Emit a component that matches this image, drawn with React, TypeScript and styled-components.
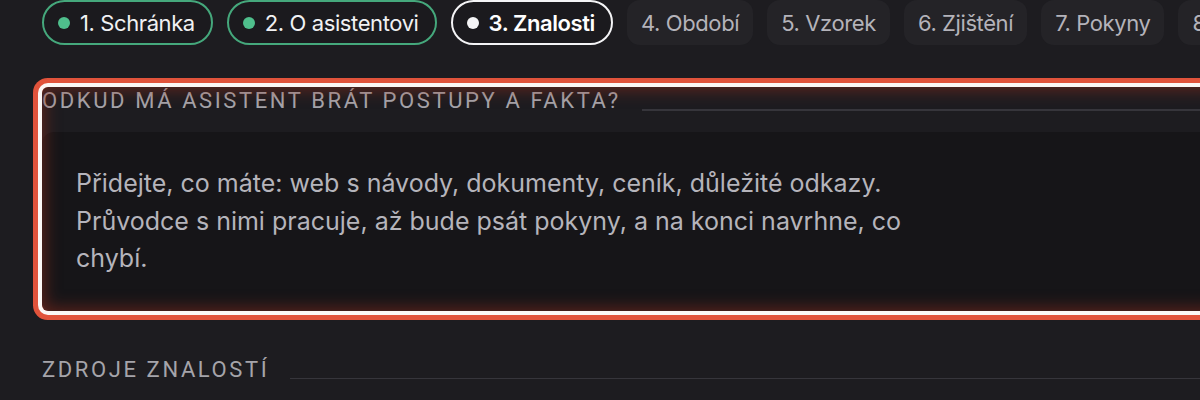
import React from "react";
import styled, { createGlobalStyle, css } from "styled-components";

const GlobalStyle = createGlobalStyle`
  html, body {
    margin: 0;
    padding: 0;
    background: #1d1c20;
    overflow: hidden;
  }
  body {
    font-family: Inter, "Noto Sans", sans-serif;
    -webkit-font-smoothing: antialiased;
  }
  * { box-sizing: border-box; }
`;

const Page = styled.div`
  width: 1320px;
  padding: 0 42px;
`;

const StepBar = styled.nav`
  display: flex;
  flex-wrap: nowrap;
  gap: 14px;
  height: 45px;
`;

type StepState = "done" | "active" | "todo";

const Step = styled.div<{ $state: StepState }>`
  display: flex;
  align-items: center;
  gap: 10px;
  flex: none;
  height: 45px;
  padding: 0 16px 0 14px;
  font-size: 22px;
  letter-spacing: -0.4px;
  white-space: nowrap;
  border: 2px solid transparent;
  ${({ $state }) =>
    $state === "done"
      ? css`
          border-color: #45a87c;
          border-radius: 999px;
          color: #f1f1f3;
          background: #1b1a1e;
        `
      : $state === "active"
      ? css`
          border-color: #f4f4f6;
          border-radius: 999px;
          color: #ffffff;
          font-weight: 600;
          background: #1b1a1e;
        `
      : css`
          border-radius: 13px;
          padding: 0 12px;
          color: #b4b3ba;
          background: #242327;
        `}
`;

const Dot = styled.span<{ $state: StepState }>`
  width: 12px;
  height: 12px;
  border-radius: 50%;
  flex: none;
  background: ${({ $state }) => ($state === "done" ? "#4fbf8c" : "#f4f4f6")};
`;

const Section = styled.section`
  position: relative;
  margin-top: 42px;
`;

const HighlightRing = styled.div`
  position: absolute;
  inset: 0;
  border-radius: 6px;
  pointer-events: none;
  box-shadow: 0 0 0 4px #fbf7f5, 0 0 0 9px #e1533b,
    inset 0 0 16px 3px rgba(150, 45, 30, 0.55);
`;

const SectionHeading = styled.div<{ $top?: number }>`
  display: flex;
  align-items: flex-start;
  gap: 21px;
  margin-top: ${({ $top }) => $top ?? 0}px;
`;

const HeadingText = styled.h2`
  margin: 0;
  font-family: Roboto, "Liberation Sans", sans-serif;
  font-size: 22px;
  line-height: 28px;
  font-weight: 400;
  letter-spacing: 2.6px;
  color: #a5a4aa;
  text-transform: uppercase;
  white-space: nowrap;
`;

const Rule = styled.div`
  flex: 1;
  height: 1.5px;
  margin-top: 22px;
  background: #36353b;
`;

const Card = styled.div`
  margin-top: 17px;
  margin-bottom: 5px;
  padding: 33px 34px 33px;
  border-radius: 12px;
  background: #161518;
`;

const Paragraph = styled.p`
  margin: 0;
  max-width: 850px;
  font-size: 25px;
  line-height: 37.5px;
  color: #b5b4bb;
`;

const steps: { label: string; state: StepState }[] = [
  { label: "1. Schránka", state: "done" },
  { label: "2. O asistentovi", state: "done" },
  { label: "3. Znalosti", state: "active" },
  { label: "4. Období", state: "todo" },
  { label: "5. Vzorek", state: "todo" },
  { label: "6. Zjištění", state: "todo" },
  { label: "7. Pokyny", state: "todo" },
  { label: "8. Kontrola", state: "todo" },
];

export default function App() {
  return (
    <>
      <GlobalStyle />
      <Page>
        <StepBar>
          {steps.map((s) => (
            <Step key={s.label} $state={s.state}>
              {s.state !== "todo" && <Dot $state={s.state} />}
              {s.label}
            </Step>
          ))}
        </StepBar>

        <Section>
          <SectionHeading>
            <HeadingText>Odkud má asistent brát postupy a fakta?</HeadingText>
            <Rule />
          </SectionHeading>
          <Card>
            <Paragraph>
              Přidejte, co máte: web s návody, dokumenty, ceník, důležité
              odkazy. Průvodce s nimi pracuje, až bude psát pokyny, a na konci
              navrhne, co chybí.
            </Paragraph>
          </Card>
          <HighlightRing />
        </Section>

        <SectionHeading $top={45}>
          <HeadingText>Zdroje znalostí</HeadingText>
          <Rule />
        </SectionHeading>
      </Page>
    </>
  );
}
